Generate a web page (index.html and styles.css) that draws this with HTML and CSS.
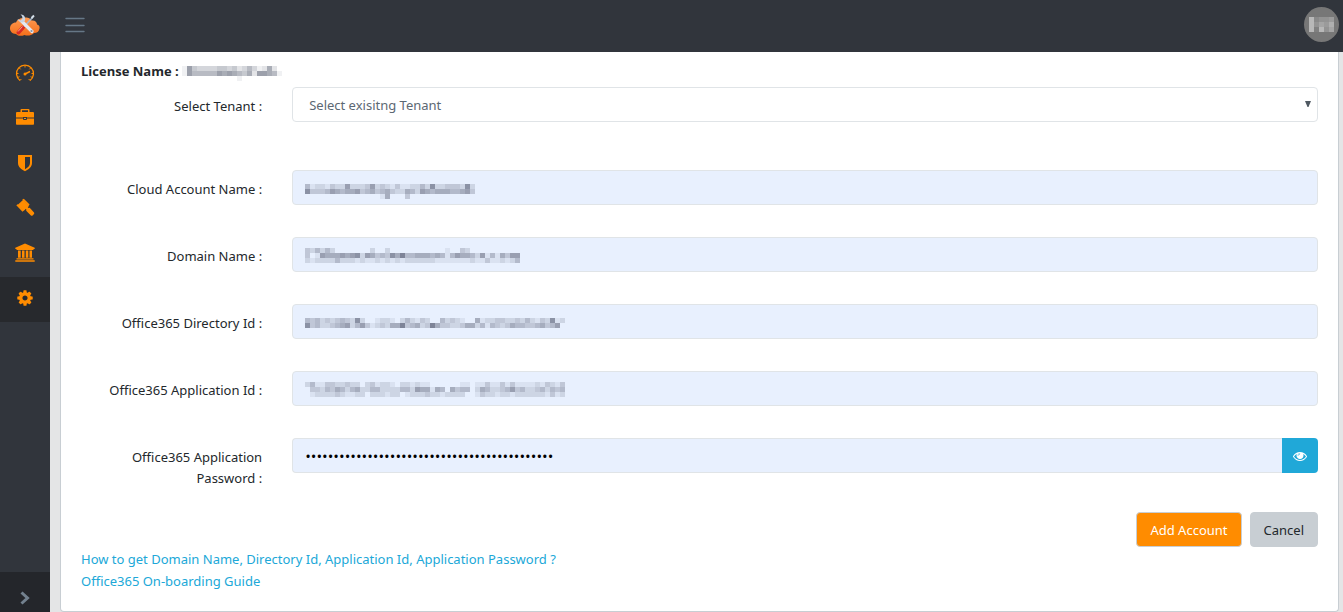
FILE: index.html
```html
<!DOCTYPE html>
<html lang="en">
<head>
<meta charset="utf-8">
<meta name="viewport" content="width=device-width, initial-scale=1">
<title>Add Cloud Account</title>
<link rel="stylesheet" href="styles.css">
</head>
<body>
<header class="topbar">
  <a class="brand" href="#" aria-label="Home">
    <svg width="32" height="24" viewBox="0 0 32 24">
      <defs><linearGradient id="cloud" x1="0" y1="0" x2="0" y2="1"><stop offset="0" stop-color="#ff9a52"/><stop offset="1" stop-color="#f46f1a"/></linearGradient></defs>
      <path d="M7 21C3 21 1 18 1 15.500C1 12 3.500 9.500 7 9.500C8 6.500 11 5 14.500 5C18 4 21 5 22.500 7.500C26 7 28 9 28 11.500C30 12 31 13.500 30.500 15.500C30 18.500 28 20 25 20C22 23 18 23 15.500 22C12 23.500 9 23 7 21Z" fill="url(#cloud)"/>
      <path d="M14 14.500L9.500 19.500" stroke="#d92b23" stroke-width="4" stroke-linecap="round"/>
      <path d="M13.500 13.500L9 18.500" stroke="#f4a49b" stroke-width="1"/>
      <path d="M15 13.500L24 4" stroke="#aab9ca" stroke-width="1.600"/>
      <path d="M22.500 5L25 2.500" stroke="#d4dee8" stroke-width="2"/>
      <path d="M13 8.500L23 18.500" stroke="#e4eaf2" stroke-width="3.200" stroke-linecap="round"/>
      <path d="M11.500 1.500C14.500 1 17 4 16 7.500C14.500 10.500 10 10 8.500 6L11.500 7.500L13.500 5.500L13 3Z" fill="#c9d4e2"/>
      <circle cx="22.500" cy="18" r="1.100" fill="#8793a5"/>
    </svg>
  </a>
  <button class="menu-toggle" type="button" aria-label="Toggle sidebar">
    <svg width="20" height="16" viewBox="0 0 20 16"><path d="M1 1.500H19M1 8.500H19M1 14.500H19" stroke="#667786" stroke-width="1.400" stroke-linecap="round"/></svg>
  </button>
  <button class="avatar" type="button" aria-label="User menu"><svg class="mosaic" data-mosaic="avatar"></svg></button>
</header>
<div class="layout">
  <nav class="sidebar" aria-label="Main">
    <a href="#" aria-label="Dashboard"><svg width="20" height="20" viewBox="0 0 20 20" fill="none" stroke="currentColor"><path d="M5 17.500A8.500 8.500 0 1 1 15 17.500" stroke-width="1.300"/><path d="M10 2.500v2M4.300 5l1.300 1.300M15.700 5l-1.300 1.300M1.500 10.500h2M16.500 10.500h2M2.500 14.500l2-.8M17.500 14.500l-2-.8M5 17.500l1.300-1.500M15 17.500l-1.300-1.500" stroke-width="1"/><path d="M10 11l5-2.500" stroke-width="1.400"/><circle cx="10" cy="11" r="1.500" fill="currentColor" stroke="none"/></svg></a>
    <a href="#" aria-label="Accounts"><svg width="20" height="20" viewBox="0 0 20 20"><path d="M5.500 4V2q0-1 1-1h7q1 0 1 1v2H18q1 0 1 1v4.500H12V9H8v.500H1V5q0-1 1-1zM7 4h6V2.300H7zM1 10.500h7V11q0 1 1 1h2q1 0 1-1v-.500h7V16q0 .800-.800.800H1.800Q1 16.800 1 16zM9 10h2v1H9z" fill="currentColor" fill-rule="evenodd"/></svg></a>
    <a href="#" aria-label="Security"><svg width="20" height="20" viewBox="0 0 20 20"><path d="M3 2h14v8c0 4-3.500 6.500-7 8.200C6.500 16.500 3 14 3 10zM10 4v12.200c2.500-1.400 5-3.200 5-6.200V4z" fill="currentColor" fill-rule="evenodd"/></svg></a>
    <a href="#" aria-label="Policies"><svg width="20" height="20" viewBox="0 0 20 20"><g fill="currentColor"><path d="M2.500 7L8 2L14 8L8.500 13Z"/><path d="M7.200 1.800L8.800.700L14.600 6.500L13.500 8ZM1.300 7.300L2.700 6.300L8.800 12.400L7.500 13.700Z"/><path d="M10.200 9.500l1.500-1.500 1.800 2 1.200-.2 4.300 4.700q.6.900 0 1.600l-1.400 1.400q-.9.500-1.700 0l-4.700-4.700.1-1.300z"/></g></svg></a>
    <a href="#" aria-label="Governance"><svg width="20" height="20" viewBox="0 0 20 20"><path d="M10 .500L19.700 4.800V6H18.500v1H1.500V6H.300V4.800zM3 7.500h2.700v7.200H3zM7 7.500h2.500v7.200H7zM10.800 7.500h2.500v7.200h-2.500zM14.500 7.500H17v7.200h-2.500zM1.500 15.300h17v1.200h-17zM.300 17.200h19.400v1.600H.300z" fill="currentColor"/></svg></a>
    <a class="active" href="#" aria-label="Settings" aria-current="page"><svg width="18" height="18" viewBox="0 0 1792 1792"><path d="M1152 896q0-106-75-181t-181-75-181 75-75 181 75 181 181 75 181-75 75-181zm512-109v222q0 12-8 23t-20 13l-185 28q-19 54-39 91 35 50 107 138 10 12 10 25t-9 23q-27 37-99 108t-94 71q-12 0-26-9l-138-108q-44 23-91 38-16 136-29 186-7 28-36 28h-222q-14 0-24.500-8.500t-11.500-21.500l-28-184q-49-16-90-37l-141 107q-10 9-25 9-14 0-25-11-126-114-165-168-7-10-7-23 0-12 8-23 15-21 51-66.500t54-70.500q-27-50-41-99l-183-27q-13-2-21-12.500t-8-23.500v-222q0-12 8-23t19-13l186-28q14-46 39-92-40-57-107-138-10-12-10-24 0-10 9-23 26-36 98.500-107.500t94.500-71.500q13 0 26 10l138 107q44-23 91-38 16-136 29-186 7-28 36-28h222q14 0 24.500 8.500t11.500 21.500l28 184q49 16 90 37l142-107q9-9 24-9 13 0 25 10 129 119 165 170 7 8 7 22 0 12-8 23-15 21-51 66.500t-54 70.500q26 50 41 98l183 28q13 2 21 12.500t8 23.500z" fill="currentColor"/></svg></a>
    <button class="expand" type="button" aria-label="Expand sidebar"><svg width="12" height="16" viewBox="0 0 12 16"><path d="M2.500 2.500L8.500 8L2.500 13.500" fill="none" stroke="#73818f" stroke-width="3"/></svg></button>
  </nav>
  <main class="content">
    <form class="card">
      <p class="license"><strong>License Name :</strong> <svg class="mosaic" data-mosaic="license"></svg></p>
      <div class="row row-tenant">
        <label for="tenant">Select Tenant :</label>
        <div class="field">
          <select id="tenant" class="control"><option>Select exisitng Tenant</option></select>
          <svg class="caret" width="6" height="6" viewBox="0 0 6 6"><path d="M0 0H6L3.500 6H2.500Z" fill="#4f5962"/></svg>
        </div>
      </div>
      <div class="row">
        <label for="account">Cloud Account Name :</label>
        <div class="field"><input id="account" class="control filled" type="text"><div class="overlay"><svg class="mosaic" data-mosaic="account"></svg></div></div>
      </div>
      <div class="row">
        <label for="domain">Domain Name :</label>
        <div class="field"><input id="domain" class="control filled" type="text"><div class="overlay"><svg class="mosaic" data-mosaic="domain"></svg></div></div>
      </div>
      <div class="row">
        <label for="directory">Office365 Directory Id :</label>
        <div class="field"><input id="directory" class="control filled" type="text"><div class="overlay"><svg class="mosaic" data-mosaic="directory"></svg></div></div>
      </div>
      <div class="row">
        <label for="application">Office365 Application Id :</label>
        <div class="field"><input id="application" class="control filled" type="text"><div class="overlay"><svg class="mosaic" data-mosaic="application"></svg></div></div>
      </div>
      <div class="row row-password">
        <label for="password">Office365 Application Password :</label>
        <div class="field group">
          <input id="password" class="control filled" type="password" value="00000000000000000000000000000000000000000000">
          <button class="reveal" type="button" aria-label="Show password"><svg width="14" height="14" viewBox="0 0 1792 1792"><path d="M1664 960q-152-236-381-353 61 104 61 225 0 185-131.500 316.500t-316.500 131.500-316.500-131.500-131.500-316.500q0-121 61-225-229 117-381 353 133 205 333.500 326.500t434.500 121.500 434.500-121.500 333.500-326.500zm-720-384q0-20-14-34t-34-14q-125 0-214.500 89.500t-89.500 214.500q0 20 14 34t34 14 34-14 14-34q0-86 61-147t147-61q20 0 34-14t14-34zm848 384q0 34-20 69-140 230-376.500 368.500t-499.500 138.500-499.500-139-376.500-368q-20-35-20-69t20-69q140-229 376.500-368t499.500-139 499.500 139 376.500 368q20 35 20 69z" fill="#fff"/><circle cx="930" cy="870" r="330" fill="#fff"/><path d="M700 830a190 190 0 0 1 190-190" fill="none" stroke="#20a8d8" stroke-width="90"/></svg></button>
        </div>
      </div>
      <div class="actions">
        <button class="btn primary" type="submit">Add Account</button>
        <button class="btn secondary" type="button">Cancel</button>
      </div>
      <div class="links">
        <a href="#">How to get Domain Name, Directory Id, Application Id, Application Password ?</a>
        <a href="#">Office365 On-boarding Guide</a>
      </div>
    </form>
  </main>
</div>
<script src="mosaic.js"></script>
</body>
</html>
```

FILE: styles.css
```css
* { box-sizing: border-box; }
body {
  margin: 0;
  min-height: 100vh;
  display: flex;
  flex-direction: column;
  background: #e4e5e6;
  color: #23282c;
  font: 13px/21px "Noto Sans", "Open Sans", sans-serif;
}
button, input, select { font: inherit; color: inherit; }
button { cursor: pointer; }
svg { display: block; flex: none; }

.topbar {
  height: 52px;
  display: flex;
  align-items: center;
  padding: 0 4px 3px 9px;
  background: #31353c;
}
.menu-toggle {
  margin-left: 24px;
  padding: 0;
  border: 0;
  background: none;
}
.avatar {
  width: 35px;
  height: 35px;
  margin-left: auto;
  padding: 0;
  display: flex;
  align-items: center;
  justify-content: center;
  border: 0;
  border-radius: 50%;
  background: #777;
  overflow: hidden;
}

.layout { flex: 1; display: flex; }
.sidebar {
  width: 50px;
  flex: none;
  display: flex;
  flex-direction: column;
  background: #31353c;
}
.sidebar a {
  height: 45px;
  display: flex;
  align-items: center;
  justify-content: center;
  padding-bottom: 4px;
  color: #ff8c00;
}
.sidebar .active { background: #27292d; }
.expand {
  height: 40px;
  margin-top: auto;
  padding: 11px 0 0;
  display: flex;
  align-items: center;
  justify-content: center;
  border: 0;
  background: #24262b;
}

.content { flex: 1; min-width: 0; padding: 0 4px 0 10px; }
.card {
  min-height: 100%;
  padding: 9px 20px 18px;
  background: #fff;
  border: 1px solid #c8ced3;
  border-top: 0;
  border-radius: 0 0 4px 4px;
}
.license {
  margin: 0 0 5px;
  display: flex;
  align-items: center;
  gap: 3px;
  font-family: "Open Sans", "Noto Sans", sans-serif;
}
.license .mosaic { margin-top: 4px; }
.row {
  display: grid;
  grid-template-columns: repeat(12, minmax(0, 1fr));
  column-gap: 30px;
  margin-bottom: 32px;
}
.row-tenant { margin-bottom: 48px; }
.row-password { margin-bottom: 23px; }
.row label {
  grid-column: span 2;
  padding-top: 9px;
  text-align: right;
}
.field { grid-column: span 10; position: relative; height: 35px; }
.control {
  width: 100%;
  height: 35px;
  padding: 7px 12px 5px;
  border: 1px solid #e0e4e7;
  border-radius: 4px;
  background: #fff;
  outline: 0;
}
select.control {
  appearance: none;
  padding-left: 16px;
  color: #5c6873;
}
.filled { background: #e8f0fe; color: #000; }
.caret { position: absolute; top: 14px; right: 7px; pointer-events: none; }
.overlay {
  position: absolute;
  top: 2px;
  bottom: 0;
  left: 13px;
  display: flex;
  align-items: center;
  pointer-events: none;
}
.group { display: flex; }
.group .control {
  padding-top: 6px;
  border-right: 0;
  border-radius: 4px 0 0 4px;
  font-family: "Open Sans", "Noto Sans", sans-serif;
  font-size: 15px;
}
.reveal {
  width: 36px;
  flex: none;
  padding: 0;
  display: flex;
  align-items: center;
  justify-content: center;
  border: 0;
  border-radius: 0 4px 4px 0;
  background: #20a8d8;
}

.actions { display: flex; justify-content: flex-end; gap: 8px; }
.btn {
  height: 35px;
  padding: 2px 13px 0;
  border: 1px solid #c8ced3;
  border-radius: 4px;
}
.primary { background: #ff8c00; color: #fff; }
.secondary { background: #c8ced3; }
.links {
  display: flex;
  flex-direction: column;
  align-items: flex-start;
  gap: 1px;
  padding-top: 2px;
}
.links a { color: #20a8d8; text-decoration: none; }
```

FILE: mosaic.js
```javascript
// Each row lists the darkness of consecutive cells, 0 being empty.
const masks = {
  avatar: { tint: '240,240,240', size: 5, rows: ['72334', '73546', '71735'] },
  license: { tint: '70,78,98', size: 5, rows: ['17433334434235312620', '17555557676546277651', '00000000000100000000'] },
  account: { tint: '60,65,88', size: 5, rows: ['0000000000000000000000000000000000', '4122132262223623213112242722333272', '7333465455634534532254265455544563', '0000000000000001500030000000000000'] },
  domain: { tint: '60,65,88', size: 5, rows: ['3242420000000200200000000000100320000000000', '3016555656726534375844555454146554261415366', '2122224222121121212122222211111112113112124'] },
  directory: { tint: '60,65,88', size: 5, rows: ['4342323432720012210242132004232100512233223242132712', '7342234562463123255834523853322355241432354433453460'] },
  application: { tint: '60,65,88', size: 5, rows: ['2411332232202312210221211000000110113113131111213213', '0332435424522442222442655154053440254223463422342434', '0122223211220222122012223221222200132212212222221312'] }
};

for (const svg of document.querySelectorAll('.mosaic')) {
  const { tint, size, rows } = masks[svg.dataset.mosaic];
  svg.setAttribute('width', rows[0].length * size);
  svg.setAttribute('height', rows.length * size);
  svg.setAttribute('shape-rendering', 'crispEdges');
  rows.forEach((row, y) => [...row].forEach((level, x) => {
    if (level === '0') return;
    const cell = document.createElementNS('http://www.w3.org/2000/svg', 'rect');
    cell.setAttribute('x', x * size);
    cell.setAttribute('y', y * size);
    cell.setAttribute('width', size);
    cell.setAttribute('height', size);
    cell.setAttribute('fill', `rgba(${tint},${level / 13})`);
    svg.append(cell);
  }));
}
```
